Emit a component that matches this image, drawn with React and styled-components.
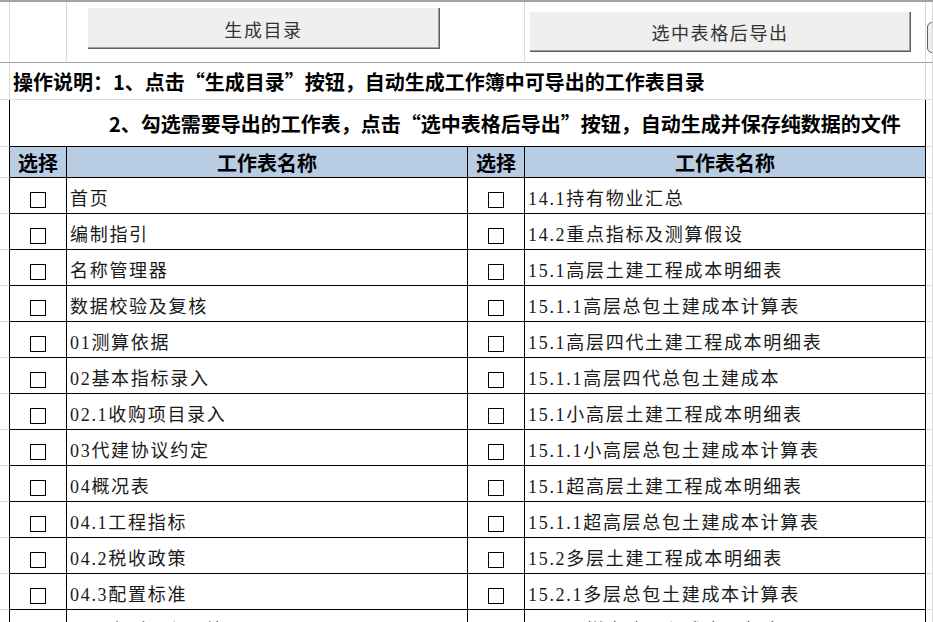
import React from "react";
import styled, { createGlobalStyle } from "styled-components";

const GRID = "#dadada";
const FREEZE = "#a3a3a3";
const INK = "#000000";
const COLUMNS = "10px 57px 401px 57px 401px 1fr";

const leftSheets = [
  "首页",
  "编制指引",
  "名称管理器",
  "数据校验及复核",
  "01测算依据",
  "02基本指标录入",
  "02.1收购项目录入",
  "03代建协议约定",
  "04概况表",
  "04.1工程指标",
  "04.2税收政策",
  "04.3配置标准",
  "04.4户型面积配比",
];

const rightSheets = [
  "14.1持有物业汇总",
  "14.2重点指标及测算假设",
  "15.1高层土建工程成本明细表",
  "15.1.1高层总包土建成本计算表",
  "15.1高层四代土建工程成本明细表",
  "15.1.1高层四代总包土建成本",
  "15.1小高层土建工程成本明细表",
  "15.1.1小高层总包土建成本计算表",
  "15.1超高层土建工程成本明细表",
  "15.1.1超高层总包土建成本计算表",
  "15.2多层土建工程成本明细表",
  "15.2.1多层总包土建成本计算表",
  "15.3叠拼土建工程成本明细表",
];

const GlobalStyle = createGlobalStyle`
  * { box-sizing: border-box; }
  html, body {
    margin: 0;
    padding: 0;
    background: #ffffff;
    overflow: hidden;
  }
  body {
    font-family: "Noto Sans CJK SC", sans-serif;
    color: #000;
  }
`;

const Sheet = styled.div`
  width: 933px;
  height: 622px;
  overflow: hidden;
  border-top: 2px solid ${FREEZE};
`;

const Row = styled.div`
  display: grid;
  grid-template-columns: ${COLUMNS};
  height: ${(p) => p.$h}px;
`;

const Cell = styled.div`
  display: flex;
  min-width: 0;
  overflow: visible;
  white-space: nowrap;
  border-right: 1px solid ${(p) => (p.$edge ? INK : GRID)};
  border-bottom: 1px solid
    ${(p) => (p.$freeze ? FREEZE : p.$under ? INK : GRID)};
  grid-column: ${(p) => p.$span || "auto"};
  background: ${(p) => (p.$head ? "#b8cce4" : "transparent")};
`;

const Clip = styled(Cell)`
  overflow: hidden;
`;

const MacroButton = styled.div`
  margin: ${(p) => p.$top}px 0 0 ${(p) => p.$left}px;
  width: ${(p) => p.$w}px;
  height: ${(p) => p.$h}px;
  background: #efefef;
  border-right: 1px solid #5f5f5f;
  border-bottom: 1px solid #5f5f5f;
  box-shadow: inset -1px -1px 0 #a0a0a0;
  display: flex;
  align-items: center;
  justify-content: center;
  font-size: 18px;
  letter-spacing: 1.6px;
  color: #333;
  font-family: "Noto Sans CJK SC", sans-serif;
  padding-top: 1px;
`;

const StubButton = styled.div`
  margin: 20px 0 0 1px;
  width: 40px;
  height: 31px;
  flex-shrink: 0;
  background: #efefef;
  border: 1px solid #5f5f5f;
  border-radius: 5px;
`;

const Note = styled.div`
  display: flex;
  align-items: center;
  padding-left: ${(p) => p.$indent}px;
  font-size: 20px;
  font-weight: 700;
  color: #000;
`;

const HeadText = styled.div`
  flex: 1;
  display: flex;
  align-items: center;
  justify-content: center;
  font-size: 20px;
  font-weight: 700;
  padding-top: 1px;
`;

const CheckSlot = styled.div`
  flex: 1;
  display: flex;
  justify-content: center;
  padding-top: 14px;
`;

const Checkbox = styled.span`
  display: block;
  width: 16px;
  height: 16px;
  border: 1px solid #000;
  background: #fff;
`;

const Name = styled.div`
  display: flex;
  align-items: center;
  padding: 2px 0 0 3px;
  font-family: "Liberation Serif", "Noto Sans CJK SC", serif;
  font-size: 18px;
  letter-spacing: 1.7px;
  color: #1a1a1a;
`;

function TopBar() {
  return (
    <Row $h={61}>
      <Cell $freeze />
      <Cell $freeze />
      <Cell $freeze $span="3 / 5">
        <MacroButton $top={6} $left={21} $w={352} $h={41}>
          生成目录
        </MacroButton>
      </Cell>
      <Cell $freeze>
        <MacroButton $top={10} $left={5} $w={381} $h={40}>
          选中表格后导出
        </MacroButton>
      </Cell>
      <Clip $freeze>
        <StubButton />
      </Clip>
    </Row>
  );
}

function SheetRow({ left, right }) {
  return (
    <Row $h={36}>
      <Cell $edge />
      <Cell $edge $under>
        <CheckSlot>
          <Checkbox />
        </CheckSlot>
      </Cell>
      <Cell $edge $under>
        <Name>{left}</Name>
      </Cell>
      <Cell $edge $under>
        <CheckSlot>
          <Checkbox />
        </CheckSlot>
      </Cell>
      <Cell $edge $under>
        <Name>{right}</Name>
      </Cell>
      <Cell />
    </Row>
  );
}

export default function App() {
  return (
    <>
      <GlobalStyle />
      <Sheet lang="zh-CN">
        <TopBar />
        <Row $h={37}>
          <Cell />
          <Cell $span="2 / 6">
            <Note $indent={3}>
              操作说明：1、点击“生成目录”按钮，自动生成工作簿中可导出的工作表目录
            </Note>
          </Cell>
          <Cell />
        </Row>
        <Row $h={47}>
          <Cell $edge />
          <Cell $edge $under $span="2 / 6">
            <Note $indent={99}>
              2、勾选需要导出的工作表，点击“选中表格后导出”按钮，自动生成并保存纯数据的文件
            </Note>
          </Cell>
          <Cell />
        </Row>
        <Row $h={31}>
          <Cell $edge />
          <Cell $edge $under $head>
            <HeadText>选择</HeadText>
          </Cell>
          <Cell $edge $under $head>
            <HeadText>工作表名称</HeadText>
          </Cell>
          <Cell $edge $under $head>
            <HeadText>选择</HeadText>
          </Cell>
          <Cell $edge $under $head>
            <HeadText>工作表名称</HeadText>
          </Cell>
          <Cell />
        </Row>
        {leftSheets.map((name, i) => (
          <SheetRow key={name} left={name} right={rightSheets[i]} />
        ))}
      </Sheet>
    </>
  );
}
